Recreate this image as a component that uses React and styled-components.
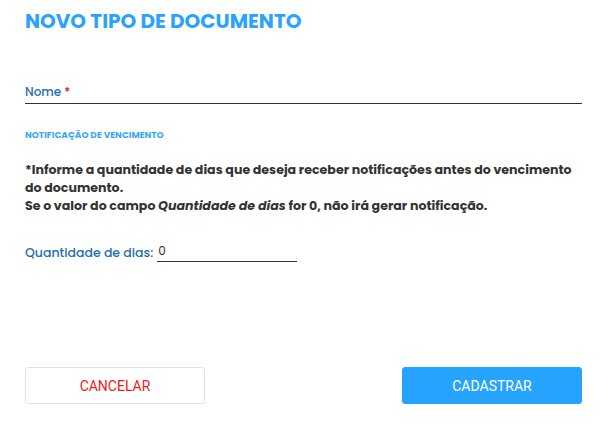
import React from 'react';
import styled, { createGlobalStyle } from 'styled-components';

const GlobalStyle = createGlobalStyle`
    body {
        margin: 0;
        background: #fff;
        font-family: Poppins, "Open Sans", "DejaVu Sans", sans-serif;
    }
`;

const Page = styled.div`
    width: 611px;
    height: 424px;
    box-sizing: border-box;
    padding: 9px 29px 20px 25px;
    display: flex;
    flex-direction: column;
`;

const Title = styled.h1`
    margin: 0;
    font-size: 20px;
    font-weight: 700;
    color: #2ba2fb;
    line-height: 24px;
`;

const Field = styled.label`
    display: flex;
    align-items: flex-end;
    margin-top: ${(p) => p.top || 0}px;
    border-bottom: ${(p) => (p.full ? '1px solid #333' : 'none')};
    padding-bottom: 2px;
`;

const Label = styled.span`
    font-size: ${(p) => p.size || 12}px;
    font-weight: 500;
    color: #1f6db0;
    white-space: nowrap;
`;

const Required = styled.span`
    color: #d32020;
    margin-left: 3px;
`;

const Input = styled.input`
    border: none;
    border-bottom: 1px solid #333;
    outline: none;
    font-family: inherit;
    font-size: 12px;
    color: #333;
    padding: 0 0 1px 1px;
    margin-left: 4px;
    width: ${(p) => p.width}px;
    background: transparent;
`;

const Section = styled.h2`
    margin: 25px 0 0;
    font-size: 9px;
    font-weight: 700;
    color: #3aa8fb;
`;

const Notice = styled.p`
    margin: 19px 0 0;
    font-size: 12.6px;
    font-weight: 700;
    color: #333;
    line-height: 18px;

    em {
        font-style: italic;
    }
`;

const Spacer = styled.div`
    flex: 1;
`;

const Actions = styled.div`
    display: flex;
    justify-content: space-between;
`;

const Button = styled.button`
    width: 180px;
    height: 37px;
    border-radius: 3px;
    font-family: Roboto, "Liberation Sans", sans-serif;
    font-size: 14px;
    cursor: pointer;
    border: 1px solid ${(p) => (p.primary ? '#26a3ff' : '#e2e2e2')};
    background: ${(p) => (p.primary ? '#26a3ff' : '#fff')};
    color: ${(p) => (p.primary ? '#fff' : '#f0201c')};
`;

const App = () => {
    return (
        <>
            <GlobalStyle />
            <Page>
                <Title>NOVO TIPO DE DOCUMENTO</Title>
                <Field top={50} full>
                    <Label>
                        Nome<Required>*</Required>
                    </Label>
                </Field>
                <Section>NOTIFICAÇÃO DE VENCIMENTO</Section>
                <Notice>
                    *Informe a quantidade de dias que deseja receber notificações antes do vencimento
                    do documento.
                    <br />
                    Se o valor do campo <em>Quantidade de dias</em> for 0, não irá gerar notificação.
                </Notice>
                <Field top={27}>
                    <Label size={12.5}>Quantidade de dias:</Label>
                    <Input width={139} defaultValue="0" />
                </Field>
                <Spacer />
                <Actions>
                    <Button>CANCELAR</Button>
                    <Button primary>CADASTRAR</Button>
                </Actions>
            </Page>
        </>
    );
};

export default App;
